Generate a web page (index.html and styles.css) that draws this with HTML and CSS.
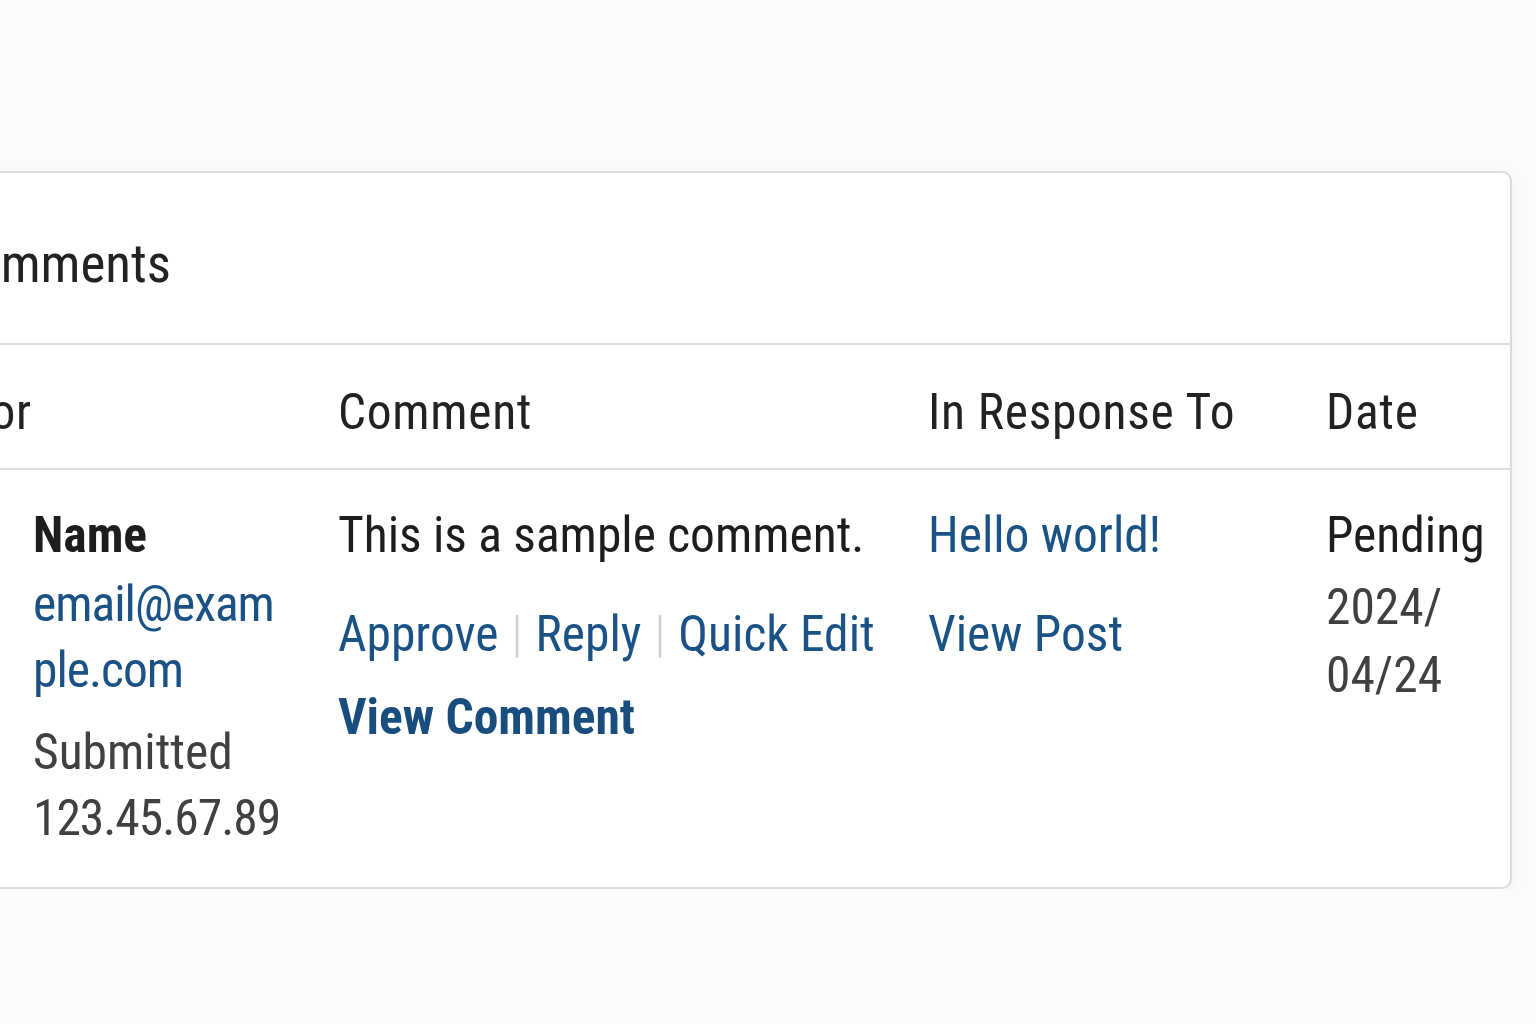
FILE: index.html
```html
<!DOCTYPE html>
<html>
<head>
    <title>Comments</title>
    <link rel="stylesheet" href="styles.css">
</head>
<body>
    <div class="card">
        <div class="card-header">
            <h2>Comments</h2>
        </div>
        <table class="comments">
            <colgroup>
                <col class="col-author">
                <col class="col-comment">
                <col class="col-response">
                <col class="col-date">
            </colgroup>
            <thead>
                <tr>
                    <th class="th-author">Author</th>
                    <th>Comment</th>
                    <th>In Response To</th>
                    <th>Date</th>
                </tr>
            </thead>
            <tbody>
                <tr>
                    <td class="author">
                        <strong class="author-name">Name</strong>
                        <a href="#" class="author-email">email@exam<wbr>ple.com</a>
                        <span class="author-label">Submitted</span>
                        <span class="author-ip">123.45.67.89</span>
                    </td>
                    <td class="comment">
                        <p class="comment-text">This is a sample comment.</p>
                        <div class="row-actions">
                            <a href="#">Approve</a><span class="sep">|</span><a href="#">Reply</a><span class="sep">|</span><a href="#">Quick Edit</a>
                        </div>
                        <a href="#" class="view-comment">View Comment</a>
                    </td>
                    <td class="response">
                        <a href="#" class="post-title">Hello world!</a>
                        <a href="#" class="view-post">View Post</a>
                    </td>
                    <td class="date">
                        <span class="status">Pending</span>
                        <span class="date-value">2024/<wbr>04/24</span>
                    </td>
                </tr>
            </tbody>
        </table>
    </div>
</body>
</html>
```

FILE: styles.css
```css
body {
    margin: 0;
    background: #fbfbfb;
    font-family: "Roboto Condensed", Roboto, sans-serif;
    font-size: 49.5px;
    line-height: 66px;
    color: #1d2327;
    overflow: hidden;
}
.card {
    margin: 171px 0 0 -130px;
    width: 1642px;
    box-sizing: border-box;
    background: #fff;
    border: 2px solid #dcdcdc;
    border-radius: 10px;
    box-shadow: 0 4px 16px rgba(0,0,0,0.04);
}
.card-header {
    height: 172px;
    box-sizing: border-box;
    padding: 58px 0 0 72px;
    border-bottom: 2px solid #dcdcdc;
}
.card-header h2 {
    margin: 0;
    font-size: 53px;
    font-weight: 400;
    line-height: 66px;
    color: #222;
}
.comments {
    width: 100%;
    table-layout: fixed;
    border-collapse: collapse;
}
.col-author { width: 448px; }
.col-comment { width: 590px; }
.col-response { width: 398px; }
.col-date { width: 202px; }
th {
    text-align: left;
    font-weight: 400;
    letter-spacing: 0.7px;
    padding: 34px 18px 23px;
    border-bottom: 2px solid #dcdcdc;
    color: #222;
}
.comments .th-author {
    padding-left: 25px;
}
td {
    vertical-align: top;
    padding: 32px 18px 36px;
}
a {
    color: #1a5285;
    text-decoration: none;
}
.author {
    padding-left: 161px;
}
.author-name {
    display: block;
    font-weight: 700;
    color: #1d1d1d;
}
.author-email {
    display: block;
    margin-top: 3px;
    letter-spacing: -1px;
}
.author-label {
    display: block;
    margin-top: 16px;
    color: #404040;
}
.author-ip {
    display: block;
    letter-spacing: -1px;
    color: #404040;
}
.comment-text {
    margin: 0;
    color: #1d1d1d;
}
.row-actions {
    margin-top: 33px;
}
.sep {
    color: #cfd0d2;
    margin: 0 13px;
    font-weight: 300;
}
.view-comment {
    display: block;
    margin-top: 17px;
    font-weight: 700;
    color: #184d7e;
}
.post-title,
.view-post {
    display: block;
}
.view-post {
    margin-top: 33px;
}
.status {
    display: block;
    color: #1d1d1d;
}
.date-value {
    display: block;
    margin-top: 5px;
    line-height: 68px;
    color: #404040;
}
```
